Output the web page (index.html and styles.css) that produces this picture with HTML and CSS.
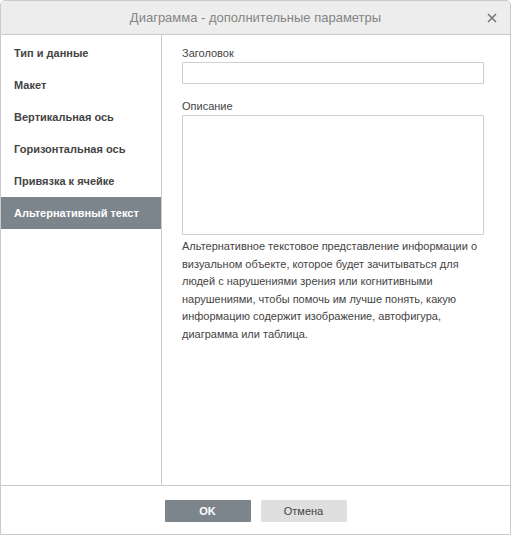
FILE: index.html
```html
<!DOCTYPE html>
<html lang="ru">
<head>
    <meta charset="UTF-8">
    <title>Диаграмма - дополнительные параметры</title>
    <link rel="stylesheet" href="styles.css">
</head>
<body>
    <div class="dialog">
        <div class="header">
            <span class="title">Диаграмма - дополнительные параметры</span>
            <span class="close">
                <svg width="10" height="10" viewBox="0 0 10 10"><path d="M1 1L9 9M9 1L1 9" stroke="#777" stroke-width="1.6"/></svg>
            </span>
        </div>
        <div class="body">
            <div class="nav">
                <div class="nav-item">Тип и данные</div>
                <div class="nav-item">Макет</div>
                <div class="nav-item">Вертикальная ось</div>
                <div class="nav-item">Горизонтальная ось</div>
                <div class="nav-item">Привязка к ячейке</div>
                <div class="nav-item active">Альтернативный текст</div>
            </div>
            <div class="content">
                <label class="field-label" for="alt-title">Заголовок</label>
                <input type="text" id="alt-title" class="field-input">

                <label class="field-label second" for="alt-desc">Описание</label>
                <textarea id="alt-desc" class="field-area"></textarea>

                <p class="hint">Альтернативное текстовое представление информации о визуальном объекте, которое будет зачитываться для людей с нарушениями зрения или когнитивными нарушениями, чтобы помочь им лучше понять, какую информацию содержит изображение, автофигура, диаграмма или таблица.</p>
            </div>
        </div>
        <div class="footer">
            <button class="btn primary">OK</button>
            <button class="btn">Отмена</button>
        </div>
    </div>
</body>
</html>
```

FILE: styles.css
```css
* {
    box-sizing: border-box;
}

body {
    margin: 0;
    padding: 0;
    font-family: "Liberation Sans", Arial, sans-serif;
    font-size: 11px;
    color: #444;
    background: #fff;
}

.dialog {
    width: 511px;
    height: 535px;
    border: 1px solid #cbcbcb;
    border-radius: 5px 5px 0 0;
    display: flex;
    flex-direction: column;
    overflow: hidden;
}

.header {
    height: 34px;
    flex: none;
    background-color: #ededed;
    border-bottom: 1px solid #cbcbcb;
    display: flex;
    align-items: center;
    justify-content: center;
    position: relative;
}

.title {
    font-size: 13px;
    color: #848484;
}

.close {
    position: absolute;
    right: 13px;
    top: 12px;
    line-height: 0;
}

.body {
    flex: 1;
    display: flex;
    border-bottom: 1px solid #cbcbcb;
}

.nav {
    width: 161px;
    flex: none;
    border-right: 1px solid #cbcbcb;
    padding-top: 2px;
}

.nav-item {
    height: 32px;
    line-height: 32px;
    padding-left: 13px;
    font-weight: bold;
    color: #444;
}

.nav-item.active {
    background-color: #7d858c;
    color: #fff;
}

.content {
    flex: 1;
    padding: 11px 26px 0 20px;
}

.field-label {
    display: block;
    line-height: 15px;
    margin-bottom: 1px;
    font-size: 11px;
}

.field-label.second {
    margin-top: 15px;
}

.field-input,
.field-area {
    display: block;
    width: 302px;
    border: 1px solid #cfcfcf;
    border-radius: 1px;
    margin: 0;
    padding: 0;
    font-family: inherit;
    resize: none;
    outline: none;
}

.field-input {
    height: 22px;
}

.field-area {
    height: 120px;
}

.hint {
    width: 302px;
    margin: 3px 0 0;
    line-height: 17.6px;
    font-size: 11px;
}

.footer {
    height: 48px;
    flex: none;
    display: flex;
    justify-content: center;
    align-items: flex-start;
    gap: 10px;
    padding-top: 14px;
}

.btn {
    width: 86px;
    height: 22px;
    border: none;
    border-radius: 1px;
    background-color: #dfdfdf;
    color: #444;
    font-family: inherit;
    font-size: 11px;
    padding: 0;
    cursor: pointer;
}

.btn.primary {
    background-color: #7d858c;
    color: #fff;
    font-weight: bold;
}
```
